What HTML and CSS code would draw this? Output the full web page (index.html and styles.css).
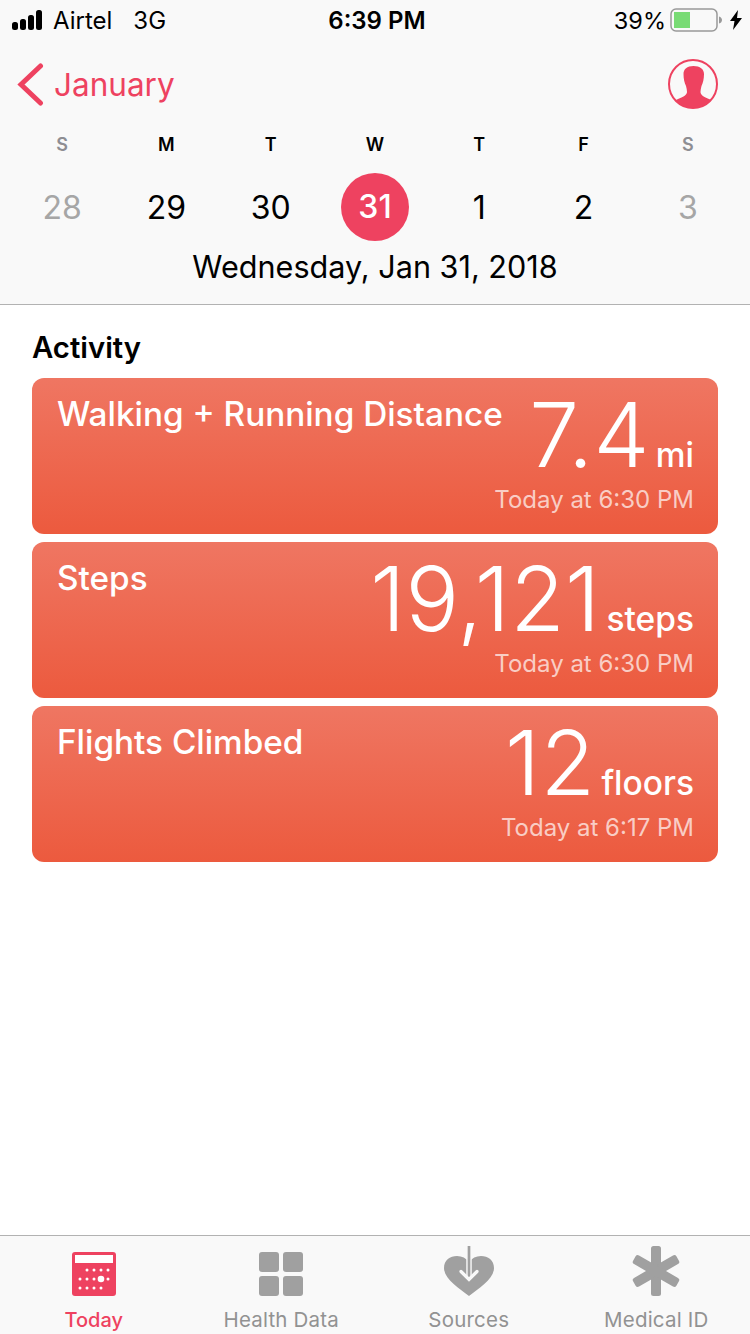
FILE: index.html
```html
<!DOCTYPE html>
<html lang="en">
<head>
  <meta charset="UTF-8" />
  <meta name="viewport" content="width=device-width, initial-scale=1.0"/>
  <title>Health - Today</title>
  <link rel="stylesheet" href="styles.css">
</head>
<body>

  <div class="page">
    <!-- HEADER -->
    <header class="top">
      <div class="status">
        <div class="status-left">
          <svg class="signal" width="36" height="20" viewBox="0 0 36 20">
            <rect x="0" y="12" width="6" height="8" rx="2.5"/>
            <rect x="8" y="9" width="6" height="11" rx="2.5"/>
            <rect x="16" y="5" width="6" height="15" rx="2.5"/>
            <rect x="24" y="0" width="6" height="20" rx="2.5"/>
          </svg>
          <span class="carrier">Airtel</span>
          <span class="network">3G</span>
        </div>
        <div class="status-time">6:39 PM</div>
        <div class="status-right">
          <span class="percent">39%</span>
          <svg width="54" height="24" viewBox="0 0 54 24">
            <rect x="1" y="1" width="46" height="22" rx="5" fill="none" stroke="#999" stroke-width="1.5"/>
            <rect x="4" y="4" width="16" height="16" fill="#79db75"/>
            <path d="M49 8.500c2 .5 3 2 3 3.500s-1 3-3 3.500z" fill="#999"/>
          </svg>
          <svg width="12" height="20" viewBox="0 0 12 20">
            <path d="M8 0 0 11h4.500L3 20l9-12H7z" fill="#000"/>
          </svg>
        </div>
      </div>

      <div class="nav">
        <a class="back" href="#">
          <svg width="28" height="44" viewBox="0 0 28 44">
            <path d="M24.500 4 5 22.500 24.500 41" fill="none" stroke="#ee4260" stroke-width="5" stroke-linecap="round" stroke-linejoin="miter"/>
          </svg>
          <span>January</span>
        </a>
        <svg class="avatar" width="50" height="50" viewBox="0 0 50 50">
          <defs><clipPath id="avatar-clip"><circle cx="25" cy="25" r="24"/></clipPath></defs>
          <circle cx="25" cy="25" r="24" fill="none" stroke="#ee4260" stroke-width="2"/>
          <path clip-path="url(#avatar-clip)" fill="#ee4260" d="M15.500 15C15.500 10 19 7 25.500 7S36 10 36 15c0 5-1 9-2.500 12-.5 2-1 4-1 6 0 3 3.500 5 8.500 7 3 1 5 3 6 6v6H4v-6c1-3 3-5 6-6 5-2 9-4 9-7 0-2-.5-4-1-6-1.500-3-2.500-7-2.500-12z"/>
        </svg>
      </div>

      <div class="week week-letters">
        <span class="muted">S</span>
        <span>M</span>
        <span>T</span>
        <span>W</span>
        <span>T</span>
        <span>F</span>
        <span class="muted">S</span>
      </div>
      <div class="week week-days">
        <span class="faded">28</span>
        <span>29</span>
        <span>30</span>
        <span class="current">31</span>
        <span>1</span>
        <span>2</span>
        <span class="faded">3</span>
      </div>
      <div class="full-date">Wednesday, Jan 31, 2018</div>
    </header>

    <!-- ACTIVITY -->
    <main class="content">
      <h2>Activity</h2>
      <div class="card">
        <div class="card-title">Walking + Running Distance</div>
        <div class="card-value">
          <div class="reading"><span class="num">7.4</span><span class="unit">mi</span></div>
          <div class="when">Today at 6:30 PM</div>
        </div>
      </div>
      <div class="card">
        <div class="card-title">Steps</div>
        <div class="card-value">
          <div class="reading"><span class="num">19,121</span><span class="unit">steps</span></div>
          <div class="when">Today at 6:30 PM</div>
        </div>
      </div>
      <div class="card">
        <div class="card-title">Flights Climbed</div>
        <div class="card-value">
          <div class="reading"><span class="num">12</span><span class="unit">floors</span></div>
          <div class="when">Today at 6:17 PM</div>
        </div>
      </div>
    </main>

    <!-- TAB BAR -->
    <nav class="tabs">
      <a class="tab active" href="#">
        <svg width="44" height="44" viewBox="0 0 44 44">
          <rect width="44" height="44" rx="3" fill="#ee4260"/>
          <rect x="3" y="3" width="38" height="8" fill="#fff"/>
          <g fill="#fff">
            <circle cx="15" cy="18" r="1.500"/><circle cx="22" cy="18" r="1.500"/><circle cx="29" cy="18" r="1.500"/><circle cx="36" cy="18" r="1.500"/>
            <circle cx="8" cy="27" r="1.500"/><circle cx="15" cy="27" r="1.500"/><circle cx="22" cy="27" r="1.500"/><circle cx="29" cy="27" r="3.300"/><circle cx="36" cy="27" r="1.500"/>
            <circle cx="8" cy="36" r="1.500"/><circle cx="15" cy="36" r="1.500"/><circle cx="22" cy="36" r="1.500"/><circle cx="29" cy="36" r="1.500"/>
          </g>
        </svg>
        <span>Today</span>
      </a>
      <a class="tab" href="#">
        <svg width="44" height="44" viewBox="0 0 44 44" fill="#a0a0a0">
          <rect width="20" height="20" rx="3"/>
          <rect x="24" width="20" height="20" rx="3"/>
          <rect y="24" width="20" height="20" rx="3"/>
          <rect x="24" y="24" width="20" height="20" rx="3"/>
        </svg>
        <span>Health Data</span>
      </a>
      <a class="tab" href="#">
        <svg width="50" height="50" viewBox="0 0 50 50">
          <path fill="#a0a0a0" d="M25 50C15 42 0 33 0 22 0 14 6 10 13 10c5 0 9 2 12 6 3-4 7-6 12-6 7 0 13 4 13 12 0 11-15 20-25 28z"/>
          <path fill="none" stroke="#f9f9f9" stroke-width="5.500" d="M25 10v22"/>
          <path fill="none" stroke="#a0a0a0" stroke-width="2.700" d="M25 0v33"/>
          <path fill="none" stroke="#f9f9f9" stroke-width="3.200" stroke-linecap="round" d="M17 25.500l8 8 8-8"/>
        </svg>
        <span>Sources</span>
      </a>
      <a class="tab" href="#">
        <svg width="50" height="50" viewBox="0 0 50 50">
          <g fill="#a0a0a0">
            <rect x="20" y="0" width="10" height="50" rx="2.500"/>
            <rect x="20" y="0" width="10" height="50" rx="2.500" transform="rotate(60 25 25)"/>
            <rect x="20" y="0" width="10" height="50" rx="2.500" transform="rotate(-60 25 25)"/>
          </g>
        </svg>
        <span>Medical ID</span>
      </a>
    </nav>
  </div>

</body>
</html>
```

FILE: styles.css
```css
body {
  font-family: 'Inter', 'Liberation Sans', sans-serif;
  margin: 0;
  background: #fff;
  color: #000;
}

a {
  text-decoration: none;
}

.page {
  display: flex;
  flex-direction: column;
  width: 750px;
  height: 1334px;
  overflow: hidden;
}

.top {
  background: #f9f9f9;
  border-bottom: 1px solid #b2b2b2;
  height: 304px;
  flex-shrink: 0;
}

.status {
  display: grid;
  grid-template-columns: 1fr auto 1fr;
  align-items: center;
  height: 40px;
  padding: 0 8px 0 12px;
  font-size: 24px;
}

.status-left {
  display: flex;
  align-items: center;
}

.signal {
  margin-right: 5px;
}

.network {
  margin-left: 21px;
}

.status-time {
  font-weight: 600;
}

.status-right {
  display: flex;
  align-items: center;
  justify-content: flex-end;
  gap: 6px;
}

.percent {
  font-size: 23.5px;
  margin-right: -2px;
}

.nav {
  display: flex;
  align-items: center;
  justify-content: space-between;
  height: 88px;
  padding: 0 32px 0 16px;
}

.back {
  display: flex;
  align-items: center;
  gap: 10px;
  color: #ee4260;
  font-size: 31.5px;
}

.week {
  display: grid;
  grid-template-columns: repeat(7, 1fr);
  padding: 0 10px;
  text-align: center;
}

.week-letters {
  font-size: 18px;
  font-weight: 600;
  height: 32px;
  line-height: 34px;
}

.week-days {
  font-size: 32px;
  height: 70px;
  line-height: 70px;
  margin-top: 13px;
  justify-items: center;
}

.muted {
  color: #8e8e93;
}

.faded {
  color: #a6a6a6;
}

.current {
  width: 68px;
  height: 68px;
  line-height: 68px;
  border-radius: 50%;
  background: #ee4260;
  color: #fff;
  font-weight: 500;
}

.full-date {
  text-align: center;
  font-size: 30.6px;
  line-height: 44px;
  margin-top: 2px;
}

.content {
  flex: 1;
  padding: 0 32px;
}

.content h2 {
  font-size: 29.3px;
  font-weight: 600;
  line-height: 40px;
  margin: 23px 0 10px 0;
}

.card {
  display: flex;
  justify-content: space-between;
  height: 156px;
  margin-bottom: 8px;
  padding: 16px 24px 0 25px;
  box-sizing: border-box;
  border-radius: 12px;
  background: linear-gradient(to bottom, #ef7662, #ec5a3e);
  color: #fff;
}

.card-title {
  flex: 1;
  min-width: 0;
  font-size: 33.3px;
  font-weight: 500;
  line-height: 41px;
  white-space: nowrap;
}

.card-value {
  flex-shrink: 0;
  text-align: right;
}

.reading {
  display: flex;
  align-items: baseline;
  justify-content: flex-end;
  gap: 6px;
  margin-top: -1px;
}

.num {
  font-size: 89px;
  font-weight: 300;
  line-height: 84px;
  letter-spacing: 0.3px;
}

.unit {
  font-size: 33.5px;
  font-weight: 500;
  line-height: 1;
}

.when {
  font-size: 24px;
  line-height: 30px;
  margin-top: 8px;
  white-space: nowrap;
  color: rgba(255, 255, 255, 0.7);
}

.tabs {
  display: grid;
  grid-template-columns: repeat(4, 1fr);
  height: 99px;
  flex-shrink: 0;
  box-sizing: border-box;
  background: #f9f9f9;
  border-top: 1px solid #b2b2b2;
}

.tab {
  display: flex;
  flex-direction: column;
  align-items: center;
  justify-content: flex-end;
  gap: 11px;
  padding-bottom: 1px;
  font-size: 20.5px;
  letter-spacing: 0.2px;
  line-height: 26px;
  color: #929292;
}

.tab.active {
  color: #ee4260;
  font-size: 20px;
  font-weight: 500;
  letter-spacing: 0;
}
```
